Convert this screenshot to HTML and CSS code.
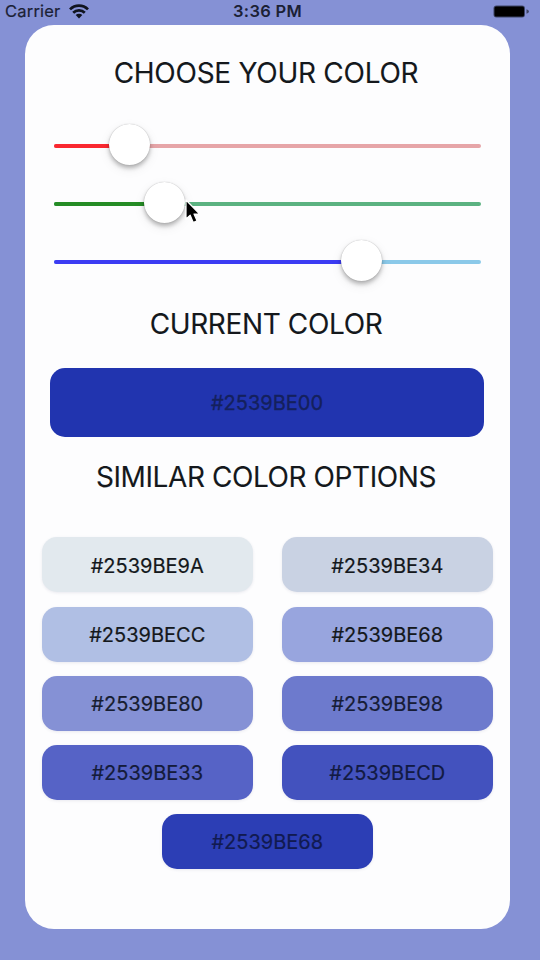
FILE: index.html
```
<!DOCTYPE html>
<html lang="en">
<head>
<meta charset="utf-8">
<title>Choose your color</title>
<link rel="stylesheet" href="styles.css">
</head>
<body>
<div class="screen">
  <header class="status">
    <div class="carrier">
      <span class="carrier-name">Carrier</span>
      <svg class="wifi" width="20" height="15" viewBox="0 0 20 15" fill="none" stroke="#10141f" stroke-width="2.7">
        <path d="M1 5.4A12.6 12.6 0 0 1 19 5.4"/>
        <path d="M4.2 8.8A8.2 8.2 0 0 1 15.8 8.8"/>
        <path d="M10 14.4L6.7 11A4.7 4.7 0 0 1 13.3 11Z" fill="#10141f" stroke="none"/>
      </svg>
    </div>
    <div class="time">3:36 PM</div>
    <div class="power">
      <svg width="37" height="13" viewBox="0 0 37 13">
        <rect x="0.5" y="0.5" width="31.5" height="12" rx="3" fill="#10141f" opacity=".6"/>
        <rect x="1.5" y="1.5" width="29.5" height="10" rx="1.5" fill="#000"/>
        <path d="M33.5 4.2Q36 5 36 6.5T33.5 8.8Z" fill="#10141f" opacity=".6"/>
      </svg>
    </div>
  </header>
  <main class="card">
    <h1 class="title choose">CHOOSE YOUR COLOR</h1>
    <div class="sliders">
      <div class="slider red"><span class="fill"></span><span class="thumb"></span></div>
      <div class="slider green"><span class="fill"></span><span class="thumb"></span>
        <svg class="cursor" width="20" height="28" viewBox="0 0 20 28">
          <path d="M2 2V21L6.2 17.2L9.2 24.5L13 22.8L10 16H15.6Z" fill="#000" stroke="#fff" stroke-width="1.2" stroke-linejoin="round"/>
        </svg>
      </div>
      <div class="slider blue"><span class="fill"></span><span class="thumb"></span></div>
    </div>
    <h2 class="title current-title">CURRENT COLOR</h2>
    <div class="current">#2539BE00</div>
    <h2 class="title similar-title">SIMILAR COLOR OPTIONS</h2>
    <div class="swatches">
      <div class="swatch s1">#2539BE9A</div>
      <div class="swatch s2">#2539BE34</div>
      <div class="swatch s3">#2539BECC</div>
      <div class="swatch s4">#2539BE68</div>
      <div class="swatch s5">#2539BE80</div>
      <div class="swatch s6">#2539BE98</div>
      <div class="swatch s7">#2539BE33</div>
      <div class="swatch s8">#2539BECD</div>
      <div class="swatch s9">#2539BE68</div>
    </div>
  </main>
</div>
</body>
</html>
```
FILE: styles.css
```
* { box-sizing: border-box; }
body {
  margin: 0;
  background: #8591d5;
  font-family: Inter, "Liberation Sans", sans-serif;
  color: #14181c;
}
.screen { width: 538px; height: 960px; overflow: hidden; }
.status {
  height: 25px;
  display: grid;
  grid-template-columns: 1fr auto 1fr;
  padding: 0 8px 3px 5px;
  align-items: center;
  color: #1b2135;
}
.carrier { display: flex; align-items: center; gap: 9px; }
.carrier-name { font-size: 16.5px; letter-spacing: 0.2px; -webkit-text-stroke: 0.2px; }
.wifi { display: block; }
.time { font-size: 16.5px; font-weight: 600; letter-spacing: 0.3px; }
.power { display: flex; justify-content: flex-end; }
.card {
  margin-left: 25px;
  width: 484.5px;
  height: 904px;
  border-radius: 29px;
  background: #fdfdfe;
  display: flex;
  flex-direction: column;
  padding: 0 16px 0 17px;
}
.title {
  margin: 0 3.5px 0 0;
  font-size: 28px;
  line-height: 34px;
  font-weight: 400;
  text-align: center;
  white-space: nowrap;
  -webkit-text-stroke: 0.1px;
}
.choose { margin-top: 30.6px; letter-spacing: -0.27px; }
.sliders { margin: 27.4px 12.5px 0 12px; display: grid; grid-auto-rows: 57.9px; }
.slider {
  --value: 17.6%;
  position: relative;
  display: flex;
  align-items: center;
}
.slider::before {
  content: "";
  flex: 1;
  height: 4px;
  border-radius: 2px;
  background: var(--rest);
}
.fill {
  position: absolute;
  left: 0;
  width: var(--value);
  height: 4px;
  border-radius: 2px;
  background: var(--done);
}
.thumb {
  position: absolute;
  left: calc(var(--value) - 20.5px);
  top: 7.5px;
  width: 41px;
  height: 41px;
  border-radius: 50%;
  background: #fff;
  box-shadow: 0 0 1px rgba(0, 0, 0, .3), 0 3px 4px rgba(0, 0, 0, .26), 0 4px 12px rgba(0, 0, 0, .08);
}
.red { --value: 17.6%; --done: #fa2830; --rest: #e6a5a8; }
.green { --value: 25.8%; --done: #258c25; --rest: #5bb281; }
.blue { --value: 72.1%; --done: #3c3cf3; --rest: #8bc9e9; }
.cursor { position: absolute; left: 130px; top: 23px; }
.current-title { margin-top: 16.3px; letter-spacing: -0.37px; }
.current {
  margin: 27px 9.5px 0 8px;
  height: 69.5px;
  border-radius: 15px;
  background: #2134af;
  color: #14205c;
  display: flex;
  align-items: center;
  justify-content: center;
  font-size: 20px;
  padding-top: 1.5px;
  -webkit-text-stroke: 0.3px;
}
.similar-title { margin-top: 23px; letter-spacing: -0.42px; }
.swatches {
  margin-top: 43px;
  display: flex;
  flex-wrap: wrap;
  justify-content: center;
  gap: 14.2px 29px;
}
.swatch {
  width: 211px;
  height: 55px;
  border-radius: 15px;
  display: flex;
  align-items: center;
  justify-content: center;
  font-size: 20px;
  padding: 1.5px 1px 0 0;
  -webkit-text-stroke: 0.2px;
  box-shadow: 0 1px 3px rgba(60, 60, 110, .1);
}
.s1 { background: #e2e9ee; }
.s2 { background: #c9d2e3; }
.s3 { background: #b0bfe4; }
.s4 { background: #98a5de; }
.s5 { background: #8591d5; color: #171d31; }
.s6 { background: #6d7acd; color: #161c36; }
.s7 { background: #5663c6; color: #141b3a; }
.s8 { background: #4352be; color: #121a43; }
.s9 { background: #2c3eb5; color: #111a50; }
```
